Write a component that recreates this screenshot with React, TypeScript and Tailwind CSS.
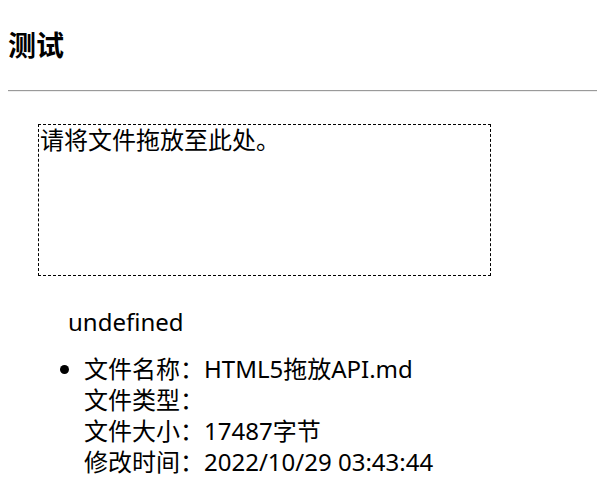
export default function App() {
  return (
    <div className="min-h-screen bg-white text-black text-[24px] leading-[31px] font-['Noto_Sans','Noto_Sans_CJK_SC',sans-serif]">
      {/* 标题 */}
      <h3 className="pl-2 pt-[27px] text-[28px] leading-[37px] font-bold">测试</h3>
      <hr className="ml-2 mt-[26px] h-[2px] border-0 border-t border-b border-t-[#9a9a9a] border-b-[#eeeeee]" />

      {/* 拖放区域 */}
      <div className="ml-[38px] mt-[32px] w-[453px] h-[152px] border border-dashed border-black pl-px pt-[2px] leading-[26px]">
        请将文件拖放至此处。
      </div>

      <p className="ml-[68px] mt-[30px]">undefined</p>

      <ul className="mt-[16px] pl-[84px] list-disc">
        <li>
          文件名称：HTML5拖放API.md
          <br />
          文件类型：
          <br />
          文件大小：17487字节
          <br />
          修改时间：2022/10/29 03:43:44
        </li>
      </ul>
    </div>
  );
}
